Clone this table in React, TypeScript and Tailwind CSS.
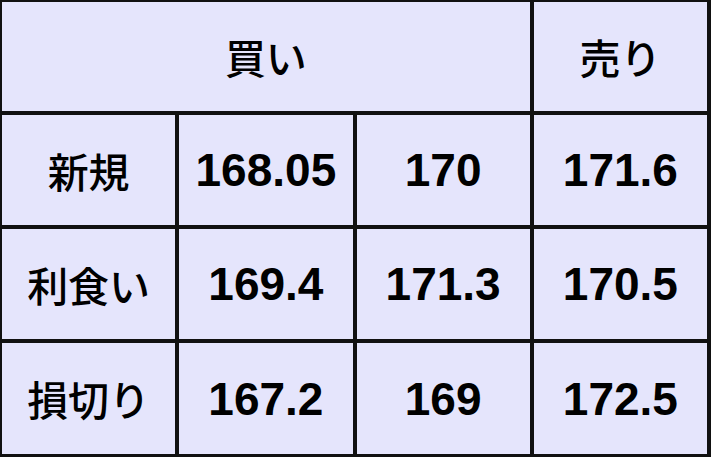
import React from "react";

const jp = "font-['Noto_Sans_CJK_JP','Noto_Sans',sans-serif] font-medium text-[41px]";
const num = "font-['Liberation_Sans',Arial,sans-serif] font-bold text-[46px]";

const rows = [
  { label: "新規", vals: ["168.05", "170", "171.6"] },
  { label: "利食い", vals: ["169.4", "171.3", "170.5"] },
  { label: "損切り", vals: ["167.2", "169", "172.5"] },
];

function Cell({ children, className = "" }: { children: React.ReactNode; className?: string }) {
  return (
    <div className={`bg-[#e5e5fc] flex items-center justify-center text-black leading-none ${className}`}>
      {children}
    </div>
  );
}

export default function App() {
  return (
    <div className="w-[711px] h-[457px] bg-[#111] pt-[2px] pl-[2px] pr-[4px] pb-[3px]">
      <div className="grid grid-cols-4 grid-rows-[109px_110px_110px_111px] gap-[4px] h-full">
        <Cell className={`col-span-3 ${jp}`}>買い</Cell>
        <Cell className={jp}>売り</Cell>
        {rows.map((r) => (
          <React.Fragment key={r.label}>
            <Cell className={jp}>{r.label}</Cell>
            {r.vals.map((v, i) => (
              <Cell key={i} className={num}>{v}</Cell>
            ))}
          </React.Fragment>
        ))}
      </div>
    </div>
  );
}
